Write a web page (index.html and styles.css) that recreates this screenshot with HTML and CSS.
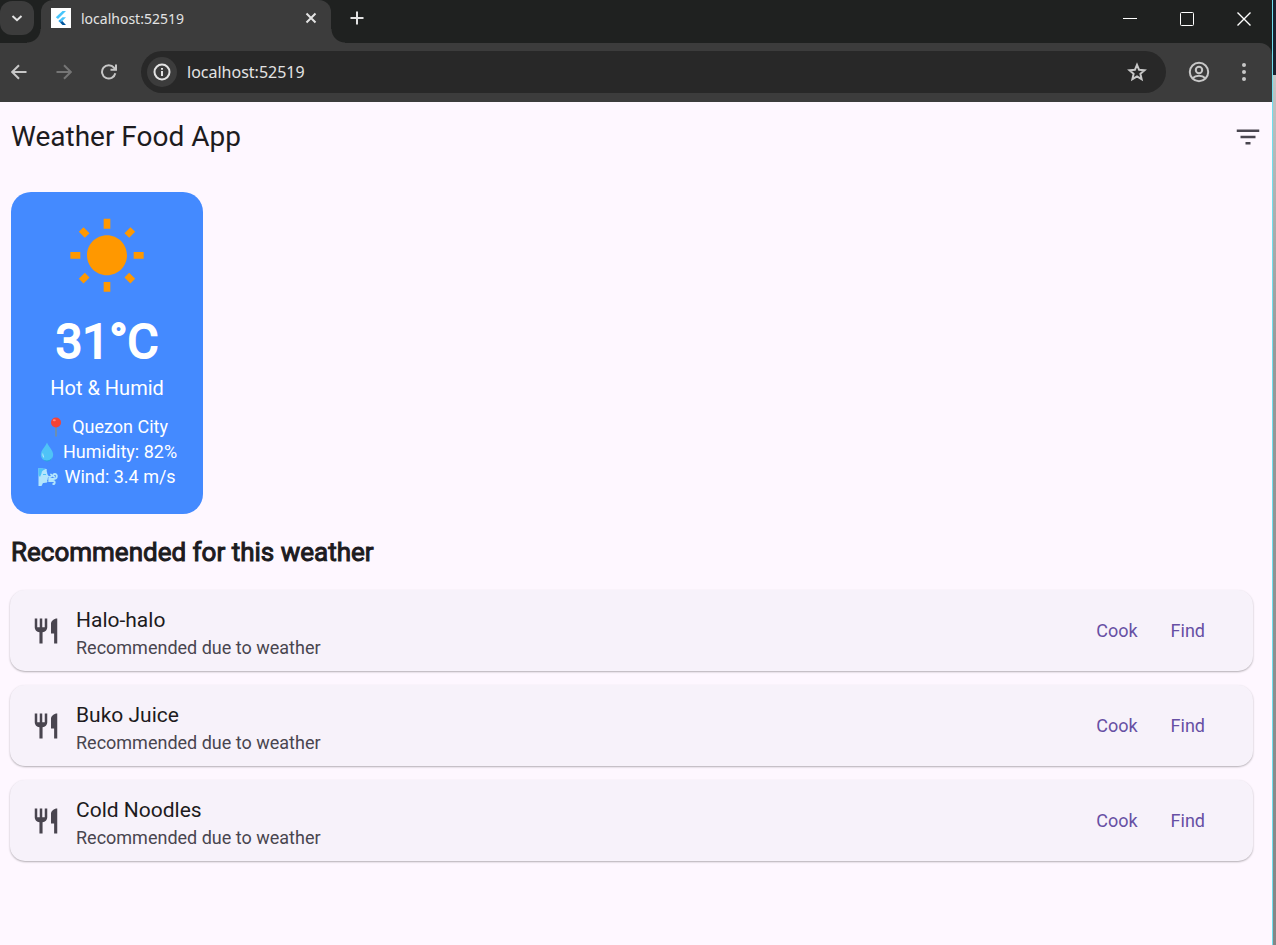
FILE: index.html
```html
<!DOCTYPE html>
<html lang="en">
<head>
<meta charset="utf-8">
<title>Weather Food App</title>
<link rel="stylesheet" href="styles.css">
</head>
<body>
<div class="desktop">
  <div class="window">
    <header class="tabstrip">
      <button class="tab-search" aria-label="Search tabs"><svg width="14" height="14" viewBox="0 0 14 14"><path class="line" d="M2.500 5l4.500 4.200L11.500 5"/></svg></button>
      <div class="tab">
        <svg class="favicon" width="20" height="20" viewBox="0 0 20 20"><path fill="#fff" d="M0 0h20v20H0z"/><path fill="#47c5fb" d="M11.500 3H15L7 11 4.800 9.300z"/><path fill="#47c5fb" d="M11.500 9.300H15L11.300 13 9 11.500z"/><path fill="#22a2ee" d="M9 11.500l2.300 1.500-2.300 1.600-1.700-1.500z"/><path fill="#00569e" d="M9 14.600l2.300-1.600L15 17h-3.500z"/></svg>
        <span class="tab-title">localhost:52519</span>
        <button class="tab-close" aria-label="Close tab"><svg width="12" height="12" viewBox="0 0 12 12"><path class="line" d="M1.500 1.500l9 9m0-9l-9 9"/></svg></button>
      </div>
      <button class="icon-button new-tab" aria-label="New tab"><svg width="14" height="14" viewBox="0 0 14 14"><path class="line" d="M7 .5v13M.5 7h13"/></svg></button>
      <div class="window-controls">
        <button class="icon-button" aria-label="Minimize"><svg width="14" height="14" viewBox="0 0 14 14"><path class="thin" d="M0 6.500h14"/></svg></button>
        <button class="icon-button" aria-label="Maximize"><svg width="14" height="14" viewBox="0 0 14 14"><rect class="thin" x=".5" y=".5" width="13" height="13" rx="1"/></svg></button>
        <button class="icon-button" aria-label="Close"><svg width="14" height="14" viewBox="0 0 14 14"><path class="thin cross" d="M.5 .5l13 13m0-13l-13 13"/></svg></button>
      </div>
    </header>
    <nav class="toolbar" aria-label="Browser">
      <button class="icon-button" aria-label="Back"><svg width="16" height="16" viewBox="0 0 16 16"><path class="line" d="M15.500 8H1.500M8 1.200L1.200 8 8 14.800"/></svg></button>
      <button class="icon-button disabled" aria-label="Forward" disabled><svg width="16" height="16" viewBox="0 0 16 16"><path class="line" d="M.5 8h14M8 1.200L14.800 8 8 14.800"/></svg></button>
      <button class="icon-button" aria-label="Reload"><svg width="16" height="16" viewBox="0 0 16 16"><path class="line" d="M14.300 9.300A6.700 6.700 0 1 1 13 3.700L14.500 5.500M15 .5v5.300H9.500"/></svg></button>
      <div class="address">
        <button class="site-info" aria-label="Site information"><svg width="18" height="18" viewBox="0 0 18 18"><circle class="line" cx="9" cy="9" r="7.500"/><path class="line" d="M9 8v5M9 5v1.800"/></svg></button>
        <input class="url" type="text" value="localhost:52519" aria-label="Address">
        <button class="icon-button star" aria-label="Bookmark this tab"><svg width="20" height="20" viewBox="0 0 20 20"><path class="line" d="M10 2.800l2.100 5 5.400.5-4.100 3.500 1.200 5.300L10 14.300l-4.600 2.800 1.200-5.300-4.100-3.500 5.400-.5z"/></svg></button>
      </div>
      <button class="icon-button profile" aria-label="Profile"><svg width="22" height="22" viewBox="0 0 22 22"><circle class="line" cx="11" cy="11" r="9.200"/><circle class="line" cx="11" cy="9" r="3.200"/><path class="line" d="M4.700 17.200c3-3.200 9.600-3.200 12.600 0"/></svg></button>
      <button class="icon-button more" aria-label="Menu"><svg width="6" height="20" viewBox="0 0 6 20"><g fill="currentColor"><circle cx="3" cy="3" r="2"/><circle cx="3" cy="10" r="2"/><circle cx="3" cy="17" r="2"/></g></svg></button>
    </nav>
    <main class="app">
      <div class="appbar">
        <h1>Weather Food App</h1>
        <button class="icon-button filter" aria-label="Filter"><svg width="30" height="30" viewBox="0 0 24 24"><path fill="currentColor" d="M10 18h4v-2h-4v2zM3 6v2h18V6H3zm3 7h12v-2H6v2z"/></svg></button>
      </div>
      <div class="content">
        <section class="weather" aria-label="Current weather">
          <svg width="80" height="80" viewBox="0 0 24 24"><path fill="#ff9800" d="M6.760 4.840l-1.800-1.790-1.410 1.410 1.790 1.790 1.420-1.410zM4 10.500H1v2h3v-2zm9-9.950h-2V3.500h2V.55zm7.450 3.910l-1.410-1.410-1.790 1.790 1.410 1.410 1.790-1.790zm-3.210 13.700l1.790 1.800 1.410-1.410-1.800-1.790-1.400 1.400zM20 10.500v2h3v-2h-3zm-8-5c-3.310 0-6 2.690-6 6s2.690 6 6 6 6-2.690 6-6-2.690-6-6-6zm-1 16.950h2V19.500h-2v2.950zm-7.450-3.910l1.410 1.410 1.790-1.800-1.410-1.410-1.790 1.800z"/></svg>
          <p class="temperature">31°C</p>
          <p class="condition">Hot &amp; Humid</p>
          <ul class="details">
            <li><svg width="20" height="20" viewBox="0 0 20 20"><path fill="#78909c" d="M9.200 8h1.600v11l-.8 1-.8-1z"/><circle cx="10" cy="5.500" r="5" fill="#f44336"/><ellipse cx="8.300" cy="3.300" rx="1.500" ry="1" fill="#ff8a80"/></svg>Quezon City</li>
            <li><svg width="20" height="20" viewBox="0 0 20 20"><path fill="#4fc3f7" d="M10 .5c1.500 4 6.200 7.800 6.200 12.300a6.200 6.200 0 0 1-12.400 0C3.800 8.300 8.500 4.500 10 .5z"/><path fill="#b3e5fc" d="M6 10.500c-1.200 2.200-.5 4.500 1 5.300.8-.3-1-2.800-1-5.300z"/><path fill="#29a3df" d="M6 17.500c3.500 2 7.500 1 9-2-.5 2.500-2.500 4-5 4-1.500 0-3-.8-4-2z"/></svg>Humidity: 82%</li>
            <li><svg width="20" height="20" viewBox="0 0 20 20"><path fill="#b3e5fc" d="M.5 1c4 1.200 6 0 8.500 1.500-1 1.300.5 3 .3 4.500l2 3-1.700 1 .4 1.300-1 .7.500 1.500c-.5 1.800-3 1.200-4.500 1.500L3.500 19H.5z"/><path fill="#4fc3f7" d="M.5 1c3 .5 5 .3 7 1.200-2.500.8-3.800 1.600-4 4.300L2 10 .5 8zM5 7h3v1H5z"/><path fill="none" stroke="#b3e5fc" stroke-width="1.800" stroke-linecap="round" d="M11 12h5c3.500 0 3.800-5 .8-5-2 0-2.200 2.700-.4 2.900M11 14h4c2.500.2 2 3.400.2 3M11.500 10c2 .3 3-2 1.500-2.500"/></svg>Wind: 3.4 m/s</li>
          </ul>
        </section>
        <h2>Recommended for this weather</h2>
        <ul class="foods">
          <li class="food">
            <svg width="30" height="30" viewBox="0 0 24 24"><path fill="currentColor" d="M11 9H9V2H7v7H5V2H3v7c0 2.120 1.660 3.840 3.750 3.970V22h2.500v-9.030C11.340 12.840 13 11.120 13 9V2h-2v7zm5-3v8h2.500v8H21V2c-2.760 0-5 2.240-5 4z"/></svg>
            <div class="food-text"><h3>Halo-halo</h3><p>Recommended due to weather</p></div>
            <button class="action">Cook</button><button class="action">Find</button>
          </li>
          <li class="food">
            <svg width="30" height="30" viewBox="0 0 24 24"><path fill="currentColor" d="M11 9H9V2H7v7H5V2H3v7c0 2.120 1.660 3.840 3.750 3.970V22h2.500v-9.030C11.340 12.840 13 11.120 13 9V2h-2v7zm5-3v8h2.500v8H21V2c-2.760 0-5 2.240-5 4z"/></svg>
            <div class="food-text"><h3>Buko Juice</h3><p>Recommended due to weather</p></div>
            <button class="action">Cook</button><button class="action">Find</button>
          </li>
          <li class="food">
            <svg width="30" height="30" viewBox="0 0 24 24"><path fill="currentColor" d="M11 9H9V2H7v7H5V2H3v7c0 2.120 1.660 3.840 3.750 3.970V22h2.500v-9.030C11.340 12.840 13 11.120 13 9V2h-2v7zm5-3v8h2.500v8H21V2c-2.760 0-5 2.240-5 4z"/></svg>
            <div class="food-text"><h3>Cold Noodles</h3><p>Recommended due to weather</p></div>
            <button class="action">Cook</button><button class="action">Find</button>
          </li>
        </ul>
      </div>
    </main>
  </div>
</div>
</body>
</html>
```
FILE: styles.css
```css
* { box-sizing: border-box; }
body, h1, h2, h3, p, ul { margin: 0; padding: 0; }
ul { list-style: none; }
svg { display: block; flex: none; }
button, input { font: inherit; color: inherit; background: none; border: 0; padding: 0; }
body { font-family: Roboto, sans-serif; color: #1d1b20; }

.desktop {
  min-height: 100vh;
  display: flex;
  padding-right: 3px;
  background: linear-gradient(#1c2230 0 75px, #c4c4c4 75px, #999 350px, #858585);
}
.window {
  flex: 1;
  min-width: 0;
  display: flex;
  flex-direction: column;
  border-right: 1px solid #70dfee;
  background: #1f2120;
}
.line { fill: none; stroke: currentColor; stroke-width: 2; }
.thin { fill: none; stroke: currentColor; stroke-width: 1; }
.cross { stroke-width: 1.4; }
.icon-button { display: grid; place-items: center; flex: none; }

.tabstrip { display: flex; height: 43px; color: #e3e3e3; }
.tab-search {
  width: 34px;
  height: 34px;
  margin-top: 1px;
  display: grid;
  place-items: center;
  border-radius: 12px;
  background: #3c3c3c;
}
.tab {
  position: relative;
  display: flex;
  align-items: center;
  gap: 10px;
  width: 290px;
  margin-left: 7px;
  padding: 0 14px 7px 10px;
  border-radius: 12px 12px 0 0;
  background: #3c3c3c;
}
.tab::before, .tab::after {
  content: "";
  position: absolute;
  bottom: 0;
  width: 14px;
  height: 14px;
}
.tab::before { right: 100%; background: radial-gradient(circle at 0 0, transparent 13px, #3c3c3c 14px); }
.tab::after { left: 100%; background: radial-gradient(circle at 100% 0, transparent 13px, #3c3c3c 14px); }
.tab-title { flex: 1; font: 14px "Noto Sans", sans-serif; }
.new-tab { width: 36px; height: 36px; margin-left: 8px; }
.window-controls { display: flex; height: 37px; margin-left: auto; color: #fff; }
.window-controls .icon-button { width: 57px; }

.toolbar {
  display: flex;
  align-items: center;
  height: 59px;
  padding: 0 10px 1px 11px;
  border-radius: 0 12px 0 0;
  background: #3c3c3c;
  color: #c7c7c7;
}
.toolbar > .icon-button + .icon-button { margin-left: 29px; }
.toolbar > .disabled { color: #757575; }
.toolbar > .icon-button.more { width: 20px; margin: 0 8px 0 24px; }
.address {
  flex: 1;
  min-width: 0;
  display: flex;
  align-items: center;
  height: 42px;
  margin: 0 22px 0 24px;
  padding: 0 19px 0 6px;
  border-radius: 21px;
  background: #282828;
}
.site-info {
  width: 30px;
  height: 30px;
  display: grid;
  place-items: center;
  border-radius: 15px;
  background: #3c3c3c;
  color: #e3e3e3;
}
.url { flex: 1; min-width: 0; margin-left: 10px; font: 16px "Noto Sans", sans-serif; color: #e3e3e3; }

.app { flex: 1; background: #fef7ff; }
.appbar { display: flex; align-items: center; justify-content: space-between; height: 70px; padding: 0 9px 0 11px; }
h1 { font-size: 28px; line-height: 36px; font-weight: 400; }
.filter { color: #49454f; }

.content { padding: 20px 19px 20px 10px; }
.weather {
  display: flex;
  flex-direction: column;
  align-items: center;
  width: max-content;
  margin-left: 1px;
  padding: 25px 26px;
  border-radius: 20px;
  background: #448aff;
  color: #fff;
}
.temperature {
  margin-top: 15px;
  font-size: 48px;
  line-height: 60px;
  font-weight: 400;
  -webkit-text-stroke: 2px currentColor;
}
.condition { margin-top: 1px; font-size: 20px; line-height: 30px; }
.details { margin-top: 11px; font-size: 18px; line-height: 25px; }
.details li { display: flex; align-items: center; justify-content: center; gap: 6px; }
h2 {
  margin: 22px 0 22px 1px;
  font-size: 26px;
  line-height: 32px;
  font-weight: 400;
  -webkit-text-stroke: 1px currentColor;
}

.foods { display: flex; flex-direction: column; gap: 14px; }
.food {
  display: flex;
  align-items: center;
  min-height: 81px;
  padding: 1px 48px 0 21px;
  border-radius: 15px;
  background: #f7f2fa;
  box-shadow: 0 1px 2px rgba(0, 0, 0, .3);
  color: #49454f;
}
.food-text { flex: 1; min-width: 0; margin-left: 15px; padding-top: 3px; }
.food h3 { font-size: 21px; line-height: 30px; font-weight: 400; color: #1d1b20; }
.food p { font-size: 18px; line-height: 25px; }
.action { margin-left: 33px; font-size: 18px; line-height: 30px; color: #6750a4; }
```
